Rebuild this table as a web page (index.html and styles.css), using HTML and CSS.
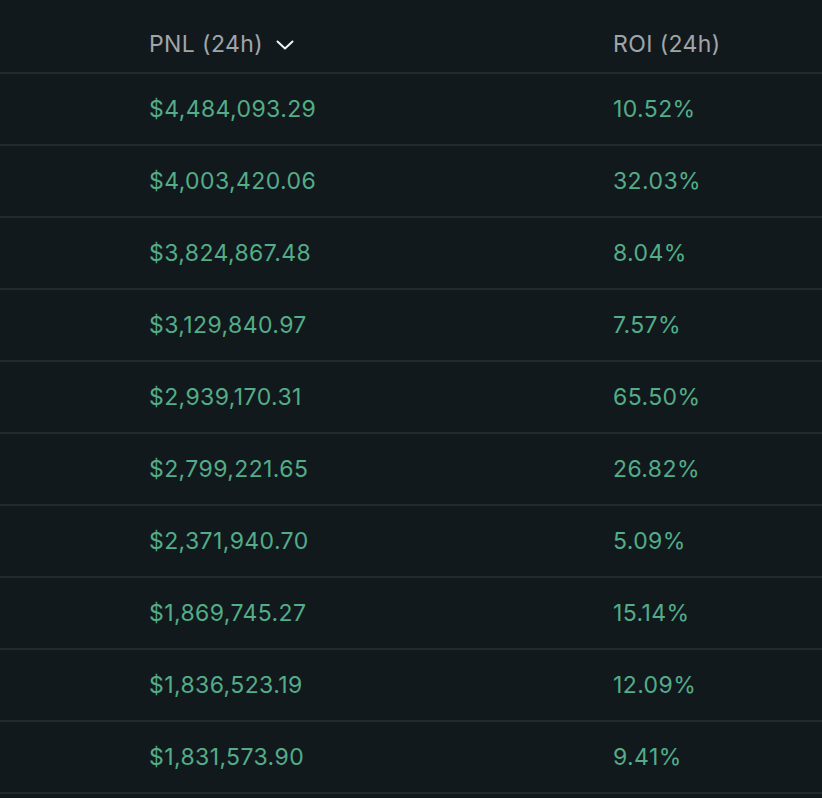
FILE: index.html
```html
<!DOCTYPE html>
<html>
<head>
<meta charset="utf-8">
<link rel="stylesheet" href="styles.css">
</head>
<body>
<div class="table">
  <div class="row head">
    <div class="cell pnl">PNL (24h)
      <svg class="chev" width="18" height="10" viewBox="0 0 18 10"><path d="M1.5 1.5 L9 8.5 L16.5 1.5" fill="none" stroke="#f2f4f5" stroke-width="2" stroke-linecap="round" stroke-linejoin="round"/></svg>
    </div>
    <div class="cell roi">ROI (24h)</div>
  </div>
  <div class="row"><div class="cell pnl">$4,484,093.29</div><div class="cell roi">10.52%</div></div>
  <div class="row"><div class="cell pnl">$4,003,420.06</div><div class="cell roi">32.03%</div></div>
  <div class="row"><div class="cell pnl">$3,824,867.48</div><div class="cell roi">8.04%</div></div>
  <div class="row"><div class="cell pnl">$3,129,840.97</div><div class="cell roi">7.57%</div></div>
  <div class="row"><div class="cell pnl">$2,939,170.31</div><div class="cell roi">65.50%</div></div>
  <div class="row"><div class="cell pnl">$2,799,221.65</div><div class="cell roi">26.82%</div></div>
  <div class="row"><div class="cell pnl">$2,371,940.70</div><div class="cell roi">5.09%</div></div>
  <div class="row"><div class="cell pnl">$1,869,745.27</div><div class="cell roi">15.14%</div></div>
  <div class="row"><div class="cell pnl">$1,836,523.19</div><div class="cell roi">12.09%</div></div>
  <div class="row"><div class="cell pnl">$1,831,573.90</div><div class="cell roi">9.41%</div></div>
</div>
</body>
</html>
```
FILE: styles.css
```css
html, body {
  margin: 0;
  padding: 0;
  background: #12191d;
}
body {
  font-family: Inter, "Noto Sans", sans-serif;
  overflow: hidden;
}
.table {
  display: flex;
  flex-direction: column;
}
.row {
  display: grid;
  grid-template-columns: 149px 464px 1fr;
  height: 70px;
  align-items: center;
  border-bottom: 2px solid #222a2e;
  color: #52ad88;
  font-size: 23px;
  letter-spacing: 0.4px;
}
.row.head {
  height: 72px;
  align-items: end;
  color: #a1a5a9;
}
.head .cell {
  padding-bottom: 14px;
}
.pnl {
  grid-column: 2;
  display: flex;
  align-items: center;
}
.roi {
  grid-column: 3;
}
.chev {
  margin-left: 13px;
  margin-top: 2px;
}
```
